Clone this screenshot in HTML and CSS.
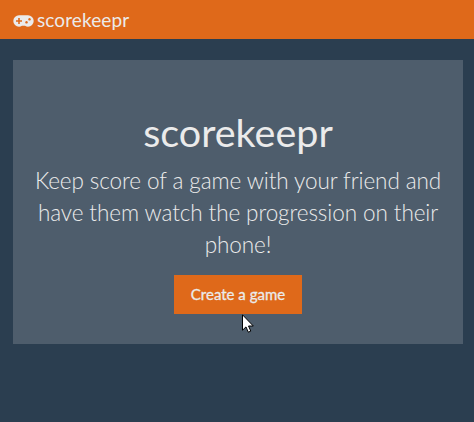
FILE: index.html
```html
<!DOCTYPE html>
<html lang="en">
<head>
<meta charset="utf-8">
<title>scorekeepr</title>
<link rel="stylesheet" href="styles.css">
</head>
<body>
<header class="navbar">
  <svg class="brand-icon" viewBox="0 0 21 12" width="21" height="12"><path fill="currentColor" fill-rule="evenodd" d="M6 .3H15A5.700 5.700 0 0 1 15 11.700Q13.500 11.700 12 10.800H9Q7.500 11.700 6 11.700A5.700 5.700 0 0 1 6 .3ZM5.200 3V5.200H3V6.800H5.200V9H6.800V6.800H9V5.200H6.800V3ZM13.500 6a1.300 1.300 0 1 0 .01 0ZM16.500 3a1.300 1.300 0 1 0 .01 0Z"/></svg>
  <span class="brand">scorekeepr</span>
</header>
<main class="hero">
  <h1 class="title">scorekeepr</h1>
  <p class="lead">Keep score of a game with your friend and have them watch the progression on their phone!</p>
  <a class="button">Create a game</a>
</main>
<svg class="cursor" viewBox="0 0 12 19" width="12" height="19"><path fill="#fff" stroke="#000" d="M.5 .8V16.200L4 12.900L6.300 18.200L8.800 17.100L6.500 12H11.300Z"/></svg>
</body>
</html>
```
FILE: styles.css
```css
* { box-sizing: border-box; }
body {
  margin: 0;
  min-height: 422px;
  background: #2b3e50;
  color: #ebebeb;
  font-family: Lato, "Liberation Sans", sans-serif;
}
.navbar {
  display: flex;
  align-items: center;
  height: 39px;
  padding: 1px 13px 0;
  gap: 3px;
  background: #df691a;
}
.brand-icon { position: relative; top: 1px; }
.brand { font-size: 19px; line-height: 38px; letter-spacing: 0.1px; }
.hero {
  margin: 21px 11px 0 13px;
  height: 284px;
  padding: 47px 15px 0;
  background: #4e5d6c;
  text-align: center;
}
.title { margin: 0; font-size: 39.5px; line-height: 50px; font-weight: 400; }
.lead {
  margin: 8px 0 14px;
  font-size: 22.5px;
  line-height: 32px;
  font-weight: 300;
  letter-spacing: -0.09px;
}
.button {
  display: inline-block;
  width: 128px;
  height: 39px;
  background: #df691a;
  font-size: 15px;
  line-height: 39px;
  -webkit-text-stroke: 0.3px currentColor;
}
.cursor { position: absolute; left: 242px; top: 314px; }
```
